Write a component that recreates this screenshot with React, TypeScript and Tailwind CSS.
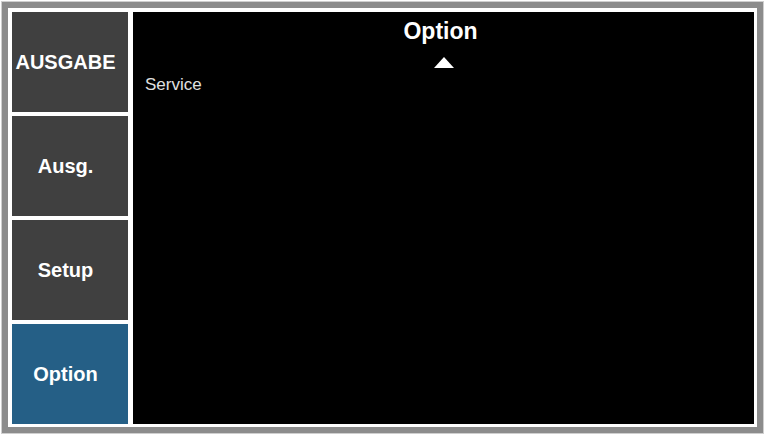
import React from "react";

// Side menu entries, last one is the active page
const menu = [
  { label: "AUSGABE", active: false },
  { label: "Ausg.", active: false },
  { label: "Setup", active: false },
  { label: "Option", active: true },
];

function MenuButton({ label, active }: { label: string; active: boolean }) {
  return (
    <div
      className={`flex h-[100px] w-full items-center justify-center pr-[9px] text-[20px] font-bold text-white ${
        active ? "bg-[#255f86]" : "bg-[#404040]"
      }`}
    >
      {label}
    </div>
  );
}

export default function App() {
  return (
    <div
      className="h-[434px] w-[765px] bg-white p-[2px]"
      style={{ fontFamily: '"Liberation Sans", Arial, sans-serif' }}
    >
      <div className="flex h-[431px] w-[761px] border-[6px] border-[#8c8c8c] bg-white pb-[3px] pl-[4px] pr-[3px] pt-[4px] shadow-[0_0_0_1px_#cfcfcf]">
        <div className="flex w-full gap-[5px]">
          {/* Menu column */}
          <div className="flex w-[116px] flex-col gap-[4px]">
            {menu.map((m) => (
              <MenuButton key={m.label} label={m.label} active={m.active} />
            ))}
          </div>

          {/* Page content */}
          <div className="flex flex-1 flex-col items-center bg-black pr-[6px] pt-[6px]">
            <div className="text-[23px] font-bold leading-[27px] text-white">Option</div>
            <svg width="20" height="11" viewBox="0 0 20 11" className="ml-[6px] mt-[12px]">
              <polygon points="10,0 20,11 0,11" fill="#ffffff" />
            </svg>
            <div className="mt-[7px] self-start pl-[12px] text-[17px] leading-[20px] text-[#e0e0e0]">
              Service
            </div>
          </div>
        </div>
      </div>
    </div>
  );
}
